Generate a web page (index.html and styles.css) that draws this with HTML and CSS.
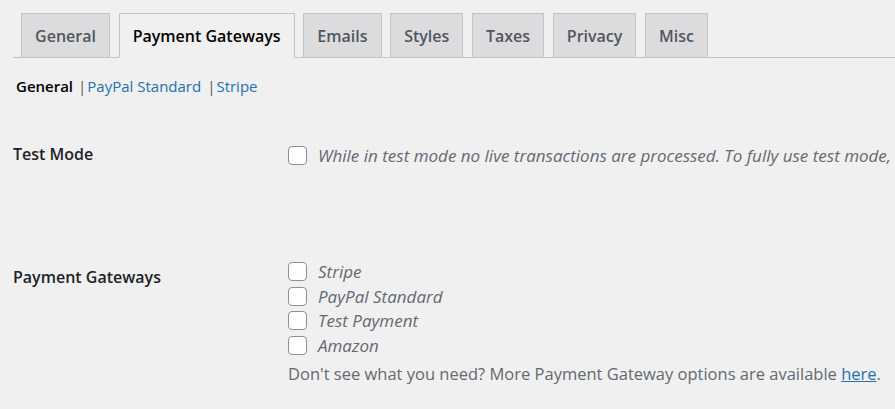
FILE: index.html
```html
<!DOCTYPE html>
<html>
<head>
<meta charset="utf-8">
<link rel="stylesheet" href="styles.css">
</head>
<body>
<div class="wrap">
  <nav class="tabs">
    <a class="tab">General</a>
    <a class="tab active">Payment Gateways</a>
    <a class="tab">Emails</a>
    <a class="tab">Styles</a>
    <a class="tab">Taxes</a>
    <a class="tab">Privacy</a>
    <a class="tab">Misc</a>
  </nav>
  <ul class="subnav">
    <li class="current">General</li>
    <li><span class="sep">|</span><a class="link">PayPal Standard</a></li>
    <li><span class="sep">|</span><a class="link">Stripe</a></li>
  </ul>
  <div class="form">
    <div class="row row-test">
      <div class="label">Test Mode</div>
      <div class="field">
        <label class="check"><span class="box"></span><span class="desc">While in test mode no live transactions are processed. To fully use test mode,</span></label>
      </div>
    </div>
    <div class="row row-gateways">
      <div class="label">Payment Gateways</div>
      <div class="field">
        <label class="check"><span class="box"></span><span class="desc">Stripe</span></label>
        <label class="check"><span class="box"></span><span class="desc">PayPal Standard</span></label>
        <label class="check"><span class="box"></span><span class="desc">Test Payment</span></label>
        <label class="check"><span class="box"></span><span class="desc">Amazon</span></label>
        <p class="note">Don't see what you need? More Payment Gateway options are available <a class="here">here</a>.</p>
      </div>
    </div>
  </div>
</div>
</body>
</html>
```
FILE: styles.css
```css
html, body {
  margin: 0;
  padding: 0;
  background: #f0f0f1;
  overflow: hidden;
}
body {
  font-family: "Open Sans", "Noto Sans", sans-serif;
  color: #1d2327;
  width: 895px;
  height: 409px;
}
.wrap {
  padding-left: 13px;
}
.tabs {
  display: flex;
  gap: 8.5px;
  padding-top: 13px;
  padding-left: 8px;
  border-bottom: 1px solid #c3c4c7;
  height: 44px;
  box-sizing: content-box;
}
.tab {
  display: flex;
  align-items: center;
  box-sizing: border-box;
  height: 45px;
  padding: 0 13.1px;
  border: 1px solid #c3c4c7;
  background: #dcdcde;
  color: #50575e;
  font-size: 16px;
  font-weight: 600;
  white-space: nowrap;
}
.tab.active {
  background: #f0f0f1;
  border-bottom-color: #f0f0f1;
  color: #000;
}
.subnav {
  list-style: none;
  margin: 0;
  padding: 0 0 0 3px;
  display: flex;
  height: 56px;
  align-items: center;
  font-size: 15px;
}
.subnav li {
  white-space: nowrap;
}
.subnav .current {
  color: #000;
  font-weight: 600;
  margin-right: 5px;
}
.subnav .sep {
  color: #50575e;
  margin-right: 1px;
}
.subnav li + li + li {
  margin-left: 6px;
}
.link {
  color: #2271b1;
}
.row {
  display: grid;
  grid-template-columns: 275px 1fr;
}
.label {
  font-size: 16px;
  font-weight: 600;
  color: #1d2327;
}
.row-test {
  padding-top: 29px;
  height: 145px;
  box-sizing: border-box;
}
.row-gateways .label {
  padding-top: 7px;
}
.field {
  display: flex;
  flex-direction: column;
}
.check {
  display: flex;
  align-items: center;
  gap: 11px;
  height: 24.7px;
  white-space: nowrap;
}
.box {
  flex: none;
  width: 19px;
  height: 19px;
  box-sizing: border-box;
  border: 1px solid #8c8f94;
  border-radius: 4px;
  background: #fff;
}
.desc {
  font-style: italic;
  color: #646970;
  font-size: 17px;
}
.note {
  margin: 4px 0 0;
  color: #646970;
  font-size: 16.5px;
  white-space: nowrap;
}
.here {
  color: #2271b1;
  text-decoration: underline;
}
```
